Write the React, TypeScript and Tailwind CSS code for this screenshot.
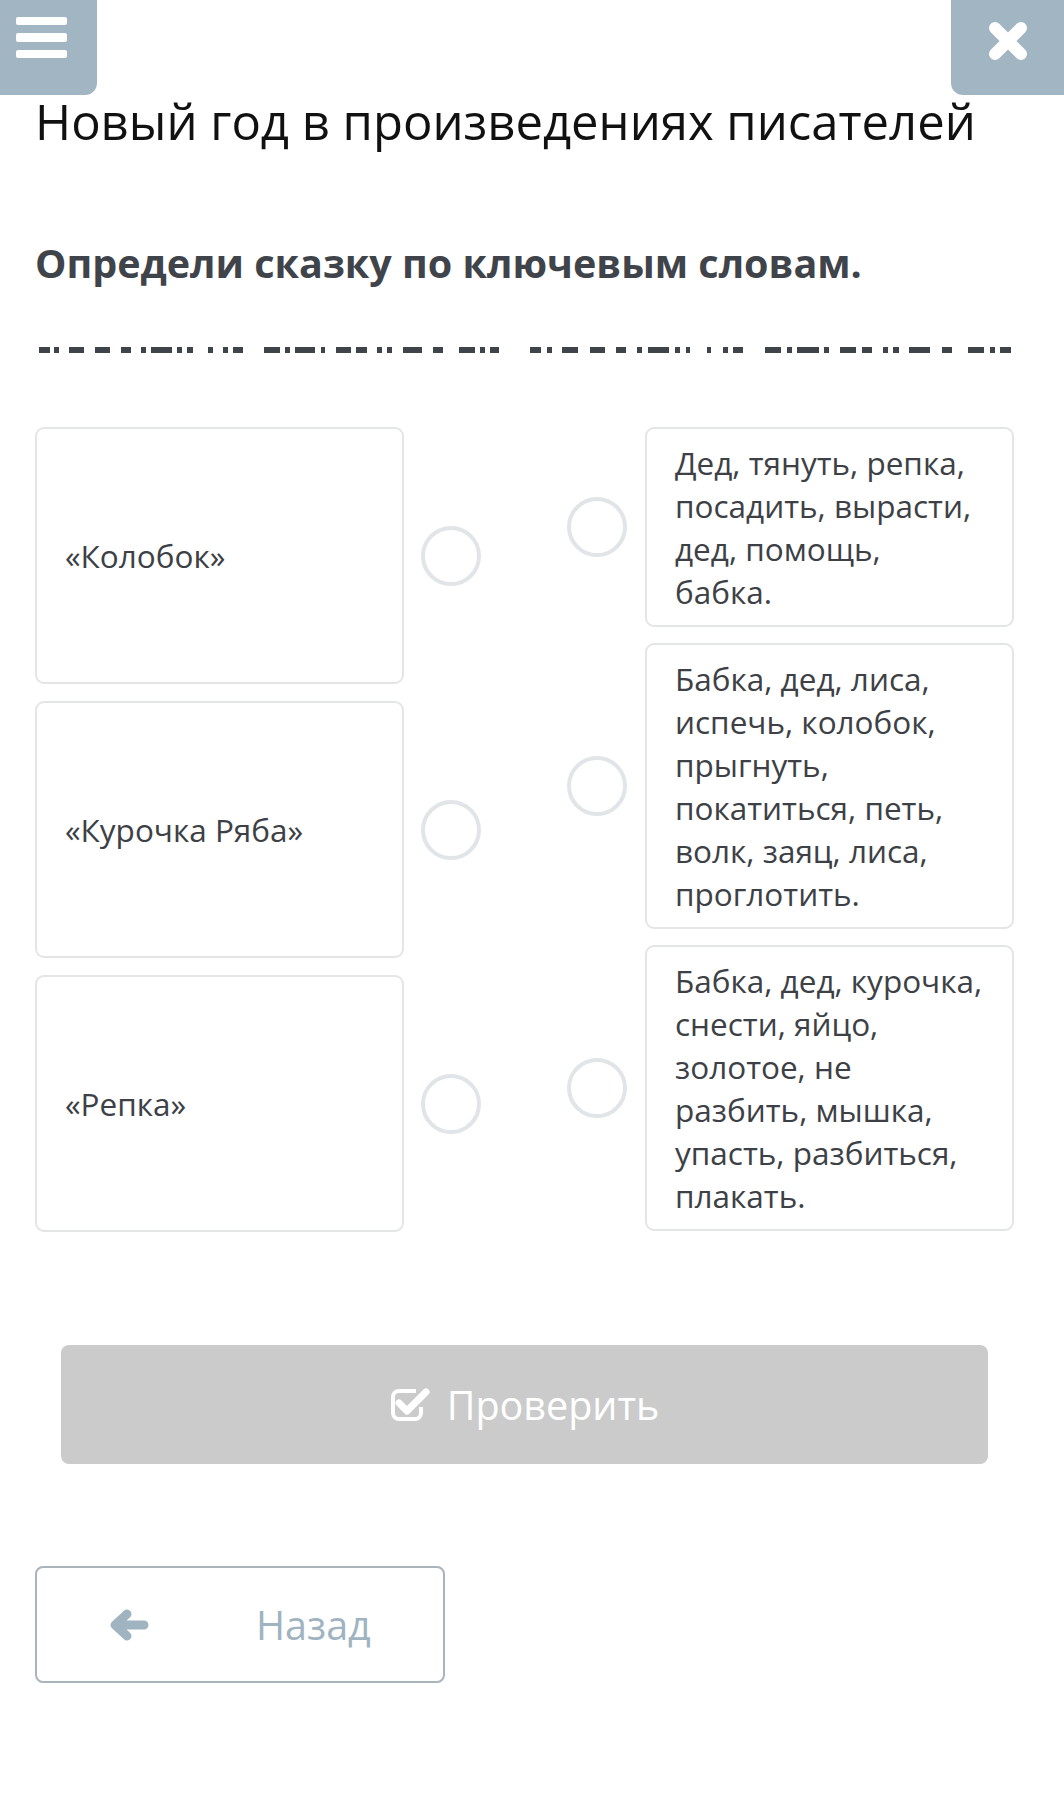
import React from 'react';

const dashes: [number, number][] = [
  [39, 50], [54, 59], [69, 84], [95, 110], [121, 131], [141, 146], [151, 172], [177, 182], [187, 193],
  [208, 213], [223, 228], [233, 243], [264, 280], [285, 290], [295, 315], [321, 325], [336, 351],
  [356, 367], [377, 382], [387, 392], [403, 422], [433, 443], [459, 475], [480, 485], [490, 499],
  [530, 541], [547, 552], [562, 578], [590, 605], [616, 626], [637, 642], [648, 669], [675, 680],
  [686, 690], [707, 711], [723, 728], [733, 743], [765, 781], [787, 792], [797, 819], [824, 829],
  [840, 856], [862, 872], [883, 888], [893, 899], [909, 930], [942, 952], [968, 984], [990, 995],
  [1000, 1011],
];

const tales = ['«Колобок»', '«Курочка Ряба»', '«Репка»'];

const keywords: string[][] = [
  ['Дед, тянуть, репка,', 'посадить, вырасти,', 'дед, помощь,', 'бабка.'],
  ['Бабка, дед, лиса,', 'испечь, колобок,', 'прыгнуть,', 'покатиться, петь,', 'волк, заяц, лиса,', 'проглотить.'],
  ['Бабка, дед, курочка,', 'снести, яйцо,', 'золотое, не', 'разбить, мышка,', 'упасть, разбиться,', 'плакать.'],
];

function Radio() {
  return <span className="block size-[60px] shrink-0 rounded-full border-4 border-[#e1e5e8] bg-white" />;
}

function MenuButton() {
  return (
    <button className="absolute left-0 top-0 flex h-[95px] w-[97px] flex-col gap-[8px] rounded-br-[12px] bg-[#a2b5c2] pl-[16px] pt-[17px]">
      <span className="block h-[8px] w-[51px] rounded-[2px] bg-white" />
      <span className="block h-[9px] w-[51px] rounded-[2px] bg-white" />
      <span className="block h-[8px] w-[51px] rounded-[2px] bg-white" />
    </button>
  );
}

function CloseButton() {
  return (
    <button className="absolute right-0 top-0 flex h-[95px] w-[113px] items-start justify-center rounded-bl-[12px] bg-[#a2b5c2] pt-[20px]">
      <svg width="42" height="42" viewBox="0 0 42 42">
        <path d="M8 8 L34 34 M34 8 L8 34" stroke="white" strokeWidth="12" strokeLinecap="round" />
      </svg>
    </button>
  );
}

export default function App() {
  return (
    <div className="relative min-h-[1815px] bg-white font-['Open_Sans',sans-serif]">
      <MenuButton />
      <CloseButton />

      <main className="pl-[35px] pr-[50px] pt-[92px]">
        <h1 className="text-[49px] font-normal leading-[58px] text-[#111111]">
          Новый год в произведениях писателей
        </h1>
        <h2 className="mt-[88px] text-[39.5px] font-bold leading-[50px] text-[#3f444b]">
          Определи сказку по ключевым словам.
        </h2>

        <svg className="mt-[59px] block" width="979" height="6" viewBox="35 0 979 6">
          {dashes.map(([a, b]) => (
            <rect key={a} x={a} y="0" width={b - a} height="6" fill="#3f434a" />
          ))}
        </svg>

        <div className="mt-[74px] flex gap-[86px]">
          <div className="flex flex-col gap-[17px]">
            {tales.map((t) => (
              <div key={t} className="flex h-[257px] items-center gap-[17px]">
                <div className="flex h-full w-[369px] items-center rounded-[9px] border-2 border-[#e3e5e7] px-[28px] text-[31.5px] leading-[43px] text-[#3d4146]">
                  {t}
                </div>
                <Radio />
              </div>
            ))}
          </div>

          <div className="flex flex-col gap-[16px]">
            {keywords.map((lines, i) => (
              <div key={i} className="flex items-center gap-[18px]">
                <Radio />
                <div className="w-[369px] rounded-[9px] border-2 border-[#e3e5e7] px-[28px] py-[12px] text-[31.5px] leading-[43px] text-[#3d4146]">
                  {lines.map((l) => (
                    <div key={l} className="whitespace-nowrap">{l}</div>
                  ))}
                </div>
              </div>
            ))}
          </div>
        </div>

        <button className="mx-[26px] mt-[113px] flex h-[119px] w-[927px] items-center justify-center gap-[15px] rounded-[8px] bg-[#cbcbcb] text-[39.5px] text-white">
          <svg width="42" height="34" viewBox="0 0 42 34">
            <path
              d="M26 3 H9 A6 6 0 0 0 3 9 V25 A6 6 0 0 0 9 31 H25 A6 6 0 0 0 31 25 V19"
              fill="none"
              stroke="white"
              strokeWidth="4"
            />
            <path d="M9 15 L17 23 L36 4" fill="none" stroke="white" strokeWidth="7" strokeLinecap="round" strokeLinejoin="round" />
          </svg>
          <span className="leading-[50px]">Проверить</span>
        </button>

        <button className="mt-[102px] flex h-[117px] w-[410px] items-center rounded-[8px] border-2 border-[#a9b4bb] bg-white pl-[72px] text-[39.5px] text-[#a0b3c0]">
          <svg width="40" height="32" viewBox="0 0 40 32">
            <path d="M35 16 H7 M18 5 L6 16 L18 27" fill="none" stroke="#9fb3c1" strokeWidth="9" strokeLinecap="round" strokeLinejoin="round" />
          </svg>
          <span className="ml-[107px] leading-[50px]">Назад</span>
        </button>
      </main>
    </div>
  );
}
